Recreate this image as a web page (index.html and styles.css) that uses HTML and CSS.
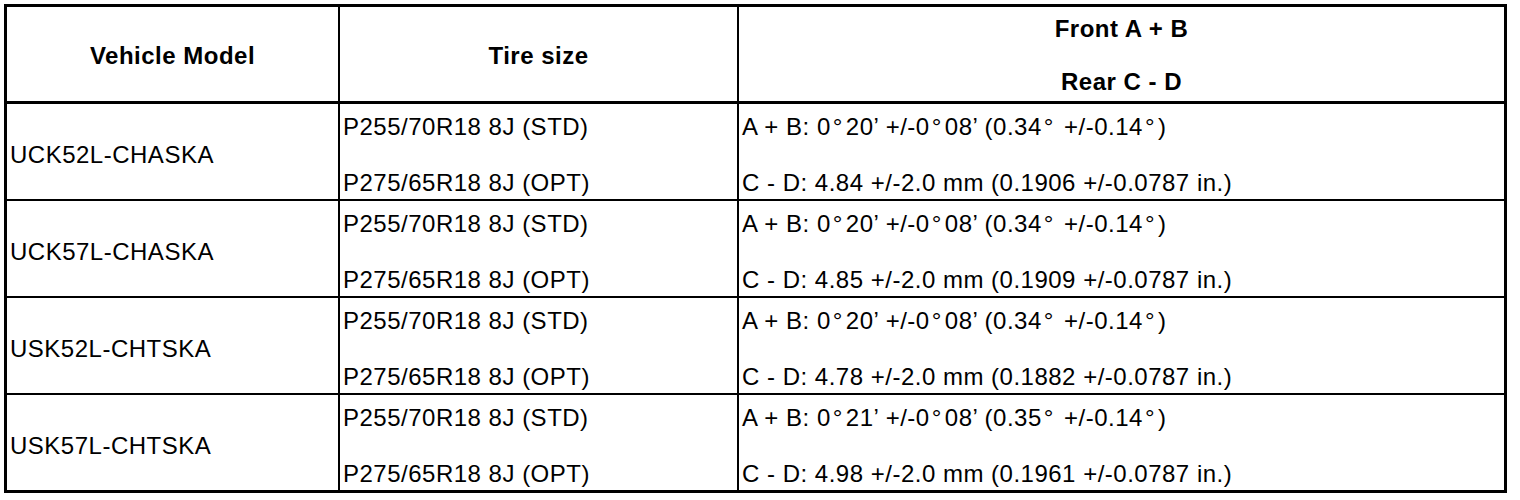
FILE: index.html
```html
<!DOCTYPE html>
<html lang="en">
<head>
	<meta charset="utf-8">
	<title>Wheel alignment - toe specification</title>
	<link rel="stylesheet" href="styles.css">
</head>
<body>
<div class="spec">
	<div class="head model">Vehicle Model</div>
	<div class="head">Tire size</div>
	<div class="head split">
		<span>Front A + B</span>
		<span>Rear C - D</span>
	</div>

	<div class="model">UCK52L-CHASKA</div>
	<div class="split">
		<span>P255/70R18 8J (STD)</span>
		<span>P275/65R18 8J (OPT)</span>
	</div>
	<div class="split">
		<span>A + B: 0<i>°</i>20’ +/-0<i>°</i>08’ (0.34<i>°</i> +/-0.14<i>°</i>)</span>
		<span>C - D: 4.84 +/-2.0 mm (0.1906 +/-0.0787 in.)</span>
	</div>

	<div class="model">UCK57L-CHASKA</div>
	<div class="split">
		<span>P255/70R18 8J (STD)</span>
		<span>P275/65R18 8J (OPT)</span>
	</div>
	<div class="split">
		<span>A + B: 0<i>°</i>20’ +/-0<i>°</i>08’ (0.34<i>°</i> +/-0.14<i>°</i>)</span>
		<span>C - D: 4.85 +/-2.0 mm (0.1909 +/-0.0787 in.)</span>
	</div>

	<div class="model">USK52L-CHTSKA</div>
	<div class="split">
		<span>P255/70R18 8J (STD)</span>
		<span>P275/65R18 8J (OPT)</span>
	</div>
	<div class="split">
		<span>A + B: 0<i>°</i>20’ +/-0<i>°</i>08’ (0.34<i>°</i> +/-0.14<i>°</i>)</span>
		<span>C - D: 4.78 +/-2.0 mm (0.1882 +/-0.0787 in.)</span>
	</div>

	<div class="model">USK57L-CHTSKA</div>
	<div class="split">
		<span>P255/70R18 8J (STD)</span>
		<span>P275/65R18 8J (OPT)</span>
	</div>
	<div class="split">
		<span>A + B: 0<i>°</i>21’ +/-0<i>°</i>08’ (0.35<i>°</i> +/-0.14<i>°</i>)</span>
		<span>C - D: 4.98 +/-2.0 mm (0.1961 +/-0.0787 in.)</span>
	</div>
</div>
</body>
</html>
```

FILE: styles.css
```css
body
{
	margin: 0;
	padding: 4px 0 0 4px;
	background: #fff;
	color: #000;
	font-family: "Liberation Sans", Arial, sans-serif;
	font-size: 24px;
	line-height: 28px;
	letter-spacing: 0.5px;
}

.spec
{
	display: grid;
	grid-template-columns: 331px 397px 765px;
	grid-auto-rows: 95px;
	gap: 2px;
	width: max-content;
	border: 3px solid #000;
	background: #000;
}

.spec > div
{
	display: flex;
	flex-direction: column;
	justify-content: space-between;
	padding: 9px 3px 2px;
	background: #fff;
}

.spec > .model
{
	justify-content: center;
}

/* degree sign sits loose in the source document */
.spec i
{
	margin: 0 3px 0 2px;
	font-style: normal;
}

.head
{
	align-items: center;
	border-bottom: 1px solid #000;
	font-weight: bold;
}

.spec > .head
{
	justify-content: center;
	padding: 8px 3px 5px;
}

.spec > .head.split
{
	justify-content: space-between;
}
```
